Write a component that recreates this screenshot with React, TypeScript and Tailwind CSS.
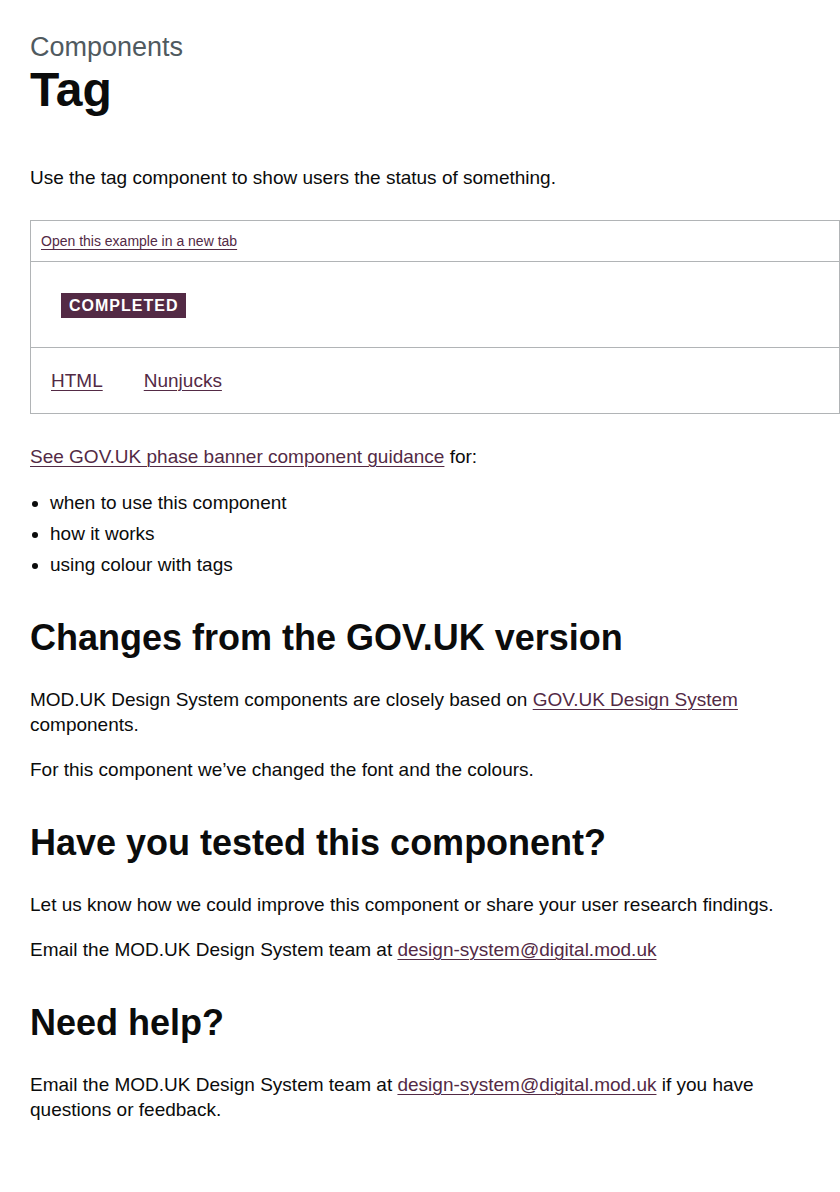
const font = { fontFamily: '"Liberation Sans", Arial, sans-serif' };

const linkClass =
  'text-[#532a45] underline decoration-1 underline-offset-[3px] hover:decoration-[3px]';

const uses = ['when to use this component', 'how it works', 'using colour with tags'];

function Email() {
  return (
    <a href="#" className={linkClass}>
      design-system@digital.mod.uk
    </a>
  );
}

export default function App() {
  return (
    <main style={font} className="bg-white text-[#0b0c0c] pl-[30px] pt-[31px] pb-16 min-h-[1192px]">
      <span className="block text-[27px] leading-[32px] text-[#505a5f] mb-[2px]">Components</span>
      <h1 className="text-[48px] leading-[50px] font-bold mb-[50px]">Tag</h1>

      <p className="text-[19px] leading-[25px] mb-[30px]">
        Use the tag component to show users the status of something.
      </p>

      <div className="border border-[#b1b4b6] mb-[30px]">
        <div className="border-b border-[#b1b4b6] px-[10px] py-[10px] text-[14px] leading-[20px]">
          <a href="#" className={`${linkClass} underline-offset-2`}>
            Open this example in a new tab
          </a>
        </div>
        <div className="border-b border-[#b1b4b6] px-[30px] pt-[31px] pb-[29px] leading-[25px]">
          <strong className="inline-block align-top bg-[#532a45] text-white text-[16px] leading-[25px] font-bold uppercase tracking-[1px] px-2">
            Completed
          </strong>
        </div>
        <div className="flex gap-[41px] px-[20px] py-[20px] text-[19px] leading-[25px]">
          <a href="#" className={linkClass}>HTML</a>
          <a href="#" className={linkClass}>Nunjucks</a>
        </div>
      </div>

      <p className="text-[19px] leading-[25px] mb-[21px]">
        <a href="#" className={linkClass}>See GOV.UK phase banner component guidance</a> for:
      </p>
      <ul className="list-disc pl-[20px] text-[19px] leading-[25px] mb-[15px]">
        {uses.map((u) => (
          <li key={u} className="mb-[6px]">
            {u}
          </li>
        ))}
      </ul>

      <h2 className="text-[36px] leading-[40px] font-bold mt-[41px] mb-[29px]">
        Changes from the GOV.UK version
      </h2>
      <p className="text-[19px] leading-[25px] mb-[20px]">
        MOD.UK Design System components are closely based on{' '}
        <a href="#" className={linkClass}>GOV.UK Design System</a> components.
      </p>
      <p className="text-[19px] leading-[25px]">
        For this component we’ve changed the font and the colours.
      </p>

      <h2 className="text-[36px] leading-[40px] font-bold mt-[41px] mb-[29px]">
        Have you tested this component?
      </h2>
      <p className="text-[19px] leading-[25px] mb-[20px]">
        Let us know how we could improve this component or share your user research findings.
      </p>
      <p className="text-[19px] leading-[25px]">
        Email the MOD.UK Design System team at <Email />
      </p>

      <h2 className="text-[36px] leading-[40px] font-bold mt-[41px] mb-[29px]">Need help?</h2>
      <p className="text-[19px] leading-[25px]">
        Email the MOD.UK Design System team at <Email /> if you have questions or feedback.
      </p>
    </main>
  );
}
